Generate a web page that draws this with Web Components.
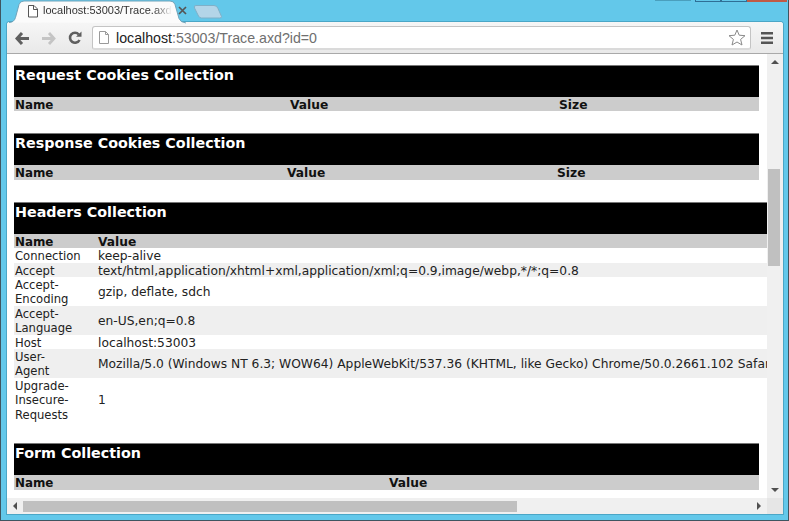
<!DOCTYPE html>
<html>
<head>
<meta charset="utf-8">
<title>Trace</title>
<style>
    html, body { margin: 0; height: 100%; overflow: hidden; background: #63c8ea; }
</style>
</head>
<body>
<browser-window>
    <browser-tabs slot="tabs" label="localhost:53003/Trace.axd"></browser-tabs>
    <browser-toolbar slot="toolbar"></browser-toolbar>

    <trace-table title="Request Cookies Collection" columns="275px 269px 1fr" width="745">
        <trace-row head><span>Name</span><span>Value</span><span>Size</span></trace-row>
    </trace-table>
    <trace-table title="Response Cookies Collection" columns="272px 270px 1fr" width="745">
        <trace-row head><span>Name</span><span>Value</span><span>Size</span></trace-row>
    </trace-table>
    <trace-table title="Headers Collection" columns="83px 1fr" width="900">
        <trace-row head><span>Name</span><span>Value</span></trace-row>
        <trace-row><span>Connection</span><span>keep-alive</span></trace-row>
        <trace-row alt><span>Accept</span><span>text/html,application/xhtml+xml,application/xml;q=0.9,image/webp,*/*;q=0.8</span></trace-row>
        <trace-row><span>Accept-<br>Encoding</span><span>gzip, deflate, sdch</span></trace-row>
        <trace-row alt><span>Accept-<br>Language</span><span>en-US,en;q=0.8</span></trace-row>
        <trace-row><span>Host</span><span>localhost:53003</span></trace-row>
        <trace-row alt><span>User-<br>Agent</span><span>Mozilla/5.0 (Windows NT 6.3; WOW64) AppleWebKit/537.36 (KHTML, like Gecko) Chrome/50.0.2661.102 Safari/537.36</span></trace-row>
        <trace-row><span>Upgrade-<br>Insecure-<br>Requests</span><span>1</span></trace-row>
    </trace-table>
    <trace-table title="Form Collection" columns="374px 1fr" width="745">
        <trace-row head><span>Name</span><span>Value</span></trace-row>
    </trace-table>
</browser-window>

<script>
class BrowserWindow extends HTMLElement {
    constructor() {
        super();
        this.attachShadow({ mode: 'open' });
        this.shadowRoot.innerHTML = `
            <style>
                :host {
                    display: flex;
                    flex-direction: column;
                    box-sizing: border-box;
                    width: 789px;
                    height: 521px;
                    padding: 1px 5px 6px 6px;
                    border: solid #3f5560;
                    border-width: 0 1px 1px 1px;
                    background: #63c8ea;
                    overflow: hidden;
                    position: relative;
                }
                .frame {
                    flex: 1;
                    min-height: 0;
                    display: flex;
                    flex-direction: column;
                    margin-top: 21px;
                    background: #fff;
                    border-radius: 3px 3px 0 0;
                    box-shadow: 0 0 0 1px #4ba6c6;
                }
                .view {
                    flex: 1;
                    min-height: 0;
                    display: grid;
                    grid-template-columns: 1fr 16px;
                    grid-template-rows: 1fr 16px;
                }
                .page {
                    overflow: hidden;
                    padding: 11px 0 0 7px;
                    min-width: 0;
                    min-height: 0;
                    font: 11.6px "DejaVu Sans", Verdana, sans-serif;
                    color: #222;
                    background: #fff;
                }
                .corner { background: #e6e6e6; }
                .tabs { position: absolute; left: 0; top: 0; right: 0; }
                .controls { position: absolute; top: 0; left: 654px; display: flex; height: 2px; }
                .controls i { display: block; height: 1px; box-sizing: content-box; }
                .min { width: 36px; background: #4a9fbd; margin-right: 4px; }
                .max { width: 24px; border: solid #2f6f96; border-width: 0 1px 1px 1px; }
                .close { width: 40px; height: 2px !important; background: #c05a45; }
            </style>
            <div class="tabs"><slot name="tabs"></slot></div>
            <div class="controls"><i class="min"></i><i class="max"></i><i class="max"></i><i class="close"></i></div>
            <div class="frame">
                <slot name="toolbar"></slot>
                <div class="view">
                    <div class="page"><slot></slot></div>
                    <scroll-bar vertical></scroll-bar>
                    <scroll-bar></scroll-bar>
                    <div class="corner"></div>
                </div>
            </div>
        `;
    }
}

class BrowserTabs extends HTMLElement {
    constructor() {
        super();
        this.attachShadow({ mode: 'open' });
        this.shadowRoot.innerHTML = `
            <style>
                :host { display: block; height: 24px; position: relative; }
                svg.shape { position: absolute; left: 0; top: 0; }
                .tab {
                    position: absolute;
                    left: 27px;
                    top: 4px;
                    display: flex;
                    align-items: center;
                    gap: 6px;
                    font: 11px "Liberation Sans", Arial, sans-serif;
                    color: #333;
                    white-space: nowrap;
                }
                .label {
                    -webkit-mask-image: linear-gradient(to right, #000 86%, transparent);
                    mask-image: linear-gradient(to right, #000 86%, transparent);
                }
                .close { width: 9px; height: 9px; flex: none; }
            </style>
            <svg class="shape" width="240" height="24" viewBox="0 0 240 24">
                <path d="M195 5.500 h18 q3 0 4 3 l3.500 8 q.5 1.500 -2 1.500 h-18 q-2 0 -3 -2 l-4 -8 q-1 -2.500 1.500 -2.500z" fill="#b3d5e8" stroke="#7fb0c8"/>
                <path d="M8 22.500 q5 0 6.500 -5 l3.500 -13 q1 -3.500 5 -3.500 h146 q4 0 5 3.500 l4 14 q1.500 4 7 4.500" fill="#fbfbfb" stroke="#6fa3ba"/>
                <path d="M27.500 5.500 h5.500 l3.500 3.500 v8 h-9z M32.500 5.500 v4 h4" fill="#fff" stroke="#555" stroke-width="1"/>
            </svg>
            <div class="tab">
                <span style="width:9px"></span>
                <span class="label">${this.getAttribute('label')}</span>
                <svg class="close" viewBox="0 0 9 9"><path d="M1 1 L8 8 M8 1 L1 8" stroke="#555" stroke-width="1.700"/></svg>
            </div>
        `;
    }
}

class BrowserToolbar extends HTMLElement {
    constructor() {
        super();
        this.attachShadow({ mode: 'open' });
        this.shadowRoot.innerHTML = `
            <style>
                :host {
                    display: flex;
                    align-items: center;
                    flex: none;
                    height: 32px;
                    box-sizing: border-box;
                    padding: 1px 10px 0 7px;
                    background: linear-gradient(#f6f6f6, #e9e9e9);
                    border-bottom: 1px solid #a9a9a9;
                    border-radius: 3px 3px 0 0;
                }
                svg { flex: none; display: block; }
                .omni {
                    flex: 1;
                    display: flex;
                    align-items: center;
                    box-sizing: border-box;
                    height: 24px;
                    margin: 0 10px 0 10px;
                    padding: 0 4px 0 6px;
                    background: #fff;
                    border: 1px solid #c4c4c4;
                    border-bottom: 2px solid #dadada;
                    border-radius: 3px;
                    font: 14.2px "Liberation Sans", Arial, sans-serif;
                    color: #6f6f6f;
                    white-space: nowrap;
                }
                .omni b { font-weight: normal; color: #222; }
                .url { flex: 1; margin-left: 7px; }
            </style>
            <svg width="15" height="13" viewBox="0 0 15 13" style="margin-left:1px"><path d="M7 1 L2 6.500 L7 12 M2.500 6.500 H14" fill="none" stroke="#5f5f5f" stroke-width="3"/></svg>
            <svg width="15" height="13" viewBox="0 0 15 13" style="margin-left:11px"><path d="M8 1 L13 6.500 L8 12 M12.500 6.500 H1" fill="none" stroke="#c4c4c4" stroke-width="2.800"/></svg>
            <svg width="14" height="14" viewBox="0 0 14 14" style="margin-left:12px"><path d="M11.500 9 A5 5 0 1 1 10.800 3.500" fill="none" stroke="#5f5f5f" stroke-width="2.600"/><path d="M8 5.800 H13.500 V0.500z" fill="#5f5f5f"/></svg>
            <div class="omni">
                <svg width="10" height="13" viewBox="0 0 10 13"><path d="M.5 .5 h6 l3 3 v9 h-9z M6.500 .5 v3 h3" fill="#fff" stroke="#9a9a9a"/></svg>
                <span class="url"><b>localhost</b>:53003/Trace.axd?id=0</span>
                <svg width="18" height="17" viewBox="0 0 18 17"><path d="M9 1 L11.200 6.200 L17 6.700 L12.600 10.400 L14 16 L9 13 L4 16 L5.400 10.400 L1 6.700 L6.800 6.200z" fill="#fff" stroke="#8a8a8a"/></svg>
            </div>
            <svg width="12" height="12" viewBox="0 0 12 12"><path d="M0 1.300 H12 M0 6 H12 M0 10.700 H12" stroke="#555" stroke-width="2.400"/></svg>
        `;
    }
}

class TraceTable extends HTMLElement {
    constructor() {
        super();
        this.attachShadow({ mode: 'open' });
        this.shadowRoot.innerHTML = `
            <style>
                :host {
                    display: block;
                    margin-bottom: 22px;
                    --columns: ${this.getAttribute('columns')};
                    width: ${this.getAttribute('width')}px;
                }
                .title {
                    box-sizing: border-box;
                    height: 32px;
                    padding: 0 1px;
                    background: #000;
                    border-top: 1px solid #777;
                    color: #fff;
                    font: bold 14.300px/18px "DejaVu Sans", Verdana, sans-serif;
                    white-space: nowrap;
                }
            </style>
            <div class="title">${this.getAttribute('title')}</div>
            <slot></slot>
        `;
    }
}

class TraceRow extends HTMLElement {
    constructor() {
        super();
        this.attachShadow({ mode: 'open' });
        this.shadowRoot.innerHTML = `
            <style>
                :host {
                    display: grid;
                    grid-template-columns: var(--columns);
                    align-items: center;
                    padding-left: 1px;
                    line-height: 14.400px;
                    white-space: nowrap;
                }
                :host([head]) {
                    background: #ccc;
                    font-weight: bold;
                    font-size: 11.900px;
                    color: #111;
                }
                :host([alt]) { background: #efefef; }
                ::slotted(span) { padding-top: 1px; margin-bottom: -1px; }
                ::slotted(span:not(:first-child)) { font-size: 12.250px; }
            </style>
            <slot></slot>
        `;
    }
}

class ScrollBar extends HTMLElement {
    constructor() {
        super();
        this.attachShadow({ mode: 'open' });
        const vertical = this.hasAttribute('vertical');
        const back = vertical ? 'M4 10 L8 6 L12 10z' : 'M10 4 L6 8 L10 12z';
        const next = vertical ? 'M4 6 L8 10 L12 6z' : 'M6 4 L10 8 L6 12z';
        this.shadowRoot.innerHTML = `
            <style>
                :host {
                    display: flex;
                    flex-direction: ${vertical ? 'column' : 'row'};
                    background: #f0f0f0;
                    min-width: 0;
                    min-height: 0;
                }
                svg { flex: none; display: block; }
                .track { flex: 1; position: relative; }
                .thumb { position: absolute; background: #c0c0c0; }
                :host([vertical]) .thumb { left: 1px; right: 3px; top: 99px; height: 97px; }
                :host(:not([vertical])) .thumb { left: 0; width: 494px; top: 3px; bottom: 2px; }
            </style>
            <svg width="16" height="16" viewBox="0 0 16 16"><path d="${back}" fill="#505050"/></svg>
            <div class="track"><div class="thumb"></div></div>
            <svg width="16" height="16" viewBox="0 0 16 16"><path d="${next}" fill="#505050"/></svg>
        `;
    }
}

customElements.define('browser-window', BrowserWindow);
customElements.define('browser-tabs', BrowserTabs);
customElements.define('browser-toolbar', BrowserToolbar);
customElements.define('trace-table', TraceTable);
customElements.define('trace-row', TraceRow);
customElements.define('scroll-bar', ScrollBar);
</script>
</body>
</html>
